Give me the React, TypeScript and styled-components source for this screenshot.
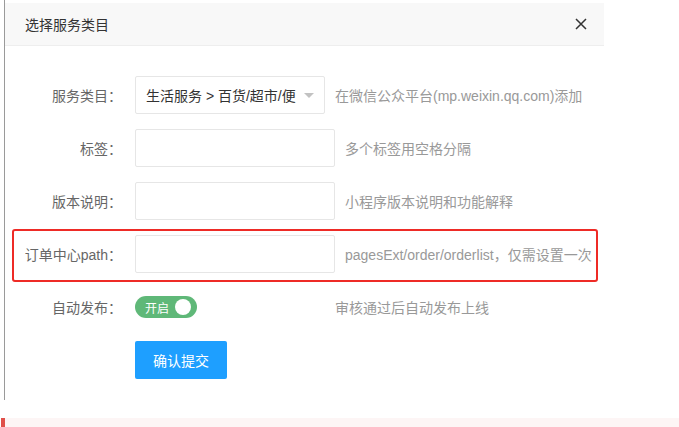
import React, { useState } from 'react'
import styled, { createGlobalStyle } from 'styled-components'

const GlobalStyle = createGlobalStyle`
  html, body {
    margin: 0;
    padding: 0;
    background: #fff;
    overflow: hidden;
  }
  body {
    font-family: "Liberation Sans", "Noto Sans CJK SC", sans-serif;
    font-size: 14px;
    color: #333;
  }
`

const Page = styled.div`
  width: 679px;
  height: 427px;
  display: flex;
  flex-direction: column;
  overflow: hidden;
`

const Layer = styled.div`
  flex: none;
  margin-left: 4px;
  width: 600px;
  height: 400px;
  padding-top: 3px;
  box-sizing: border-box;
  border-left: 1px solid #9a9a9a;
`

const LayerHeader = styled.div`
  height: 42px;
  display: flex;
  align-items: center;
  justify-content: space-between;
  padding: 0 16px 0 20px;
  background: #f8f8f8;
  border-bottom: 1px solid #eee;
`

const LayerTitle = styled.span`
  font-size: 14px;
  color: #333;
`

const CloseButton = styled.button`
  width: 14px;
  height: 14px;
  padding: 0;
  border: none;
  background: transparent;
  display: flex;
  align-items: center;
  justify-content: center;
  cursor: pointer;
`

const Form = styled.form`
  padding: 30px 0 0 0;
  display: flex;
  flex-direction: column;
  gap: 15px;
`

const FormItem = styled.div<{ $highlight?: boolean }>`
  position: relative;
  display: flex;
  align-items: center;
  height: 38px;

  ${({ $highlight }) => $highlight && `
    &::after {
      content: '';
      position: absolute;
      left: 7px;
      right: 6px;
      top: -6px;
      bottom: -9px;
      border: 2px solid #ee2b26;
      border-radius: 3px;
      pointer-events: none;
    }
  `}
`

const Label = styled.label`
  width: 117px;
  flex: none;
  text-align: right;
  color: #666;
  font-size: 14px;
  margin-right: 13px;
  white-space: nowrap;
`

const InputBlock = styled.div<{ $width: number }>`
  width: ${({ $width }) => $width}px;
  height: 38px;
  flex: none;
  margin-right: 10px;
  display: flex;
  align-items: center;
`

const TextInput = styled.input`
  width: 100%;
  height: 100%;
  box-sizing: border-box;
  border: 1px solid #e6e6e6;
  border-radius: 2px;
  padding: 0 10px;
  font: inherit;
  outline: none;
`

const SelectBox = styled.div`
  position: relative;
  width: 100%;
  height: 100%;
  box-sizing: border-box;
  border: 1px solid #e6e6e6;
  border-radius: 2px;
  padding: 0 30px 0 10px;
  display: flex;
  align-items: center;
  font-size: 14px;
  color: #333;
  white-space: nowrap;
  overflow: hidden;

  &::after {
    content: '';
    position: absolute;
    right: 10px;
    top: 16px;
    border: 5px solid transparent;
    border-top: 5px solid #c2c2c2;
  }
`

const Aux = styled.span`
  font-size: 14px;
  color: #999;
  white-space: nowrap;
`

const Switch = styled.div<{ $on: boolean }>`
  width: 62px;
  height: 22px;
  box-sizing: border-box;
  border-radius: 20px;
  background: ${({ $on }) => ($on ? '#5fb878' : '#d2d2d2')};
  display: flex;
  align-items: center;
  justify-content: space-between;
  padding: 0 6px 0 10px;
  cursor: pointer;
`

const SwitchText = styled.em`
  font-style: normal;
  font-size: 12px;
  color: #fff;
`

const Knob = styled.i`
  width: 16px;
  height: 16px;
  border-radius: 50%;
  background: #fff;
`

const SubmitButton = styled.button`
  width: 92px;
  height: 38px;
  border: none;
  border-radius: 2px;
  background: #1e9fff;
  color: #fff;
  font: inherit;
  font-size: 14px;
  cursor: pointer;
`

const Notice = styled.div`
  flex: none;
  margin-top: 18px;
  margin-left: 1px;
  height: 20px;
  background: #fdf5f5;
  border-left: 4px solid #e0504a;
`

export default function App() {
  const [autoPublish, setAutoPublish] = useState(true)

  return (
    <Page>
      <GlobalStyle />
      <Layer>
        <LayerHeader>
          <LayerTitle>选择服务类目</LayerTitle>
          <CloseButton type="button" aria-label="关闭">
            <svg width="12" height="12" viewBox="0 0 12 12">
              <path d="M1 1 L11 11 M11 1 L1 11" stroke="#333" strokeWidth="1.5" />
            </svg>
          </CloseButton>
        </LayerHeader>

        <Form onSubmit={(e) => e.preventDefault()}>
          <FormItem>
            <Label>服务类目：</Label>
            <InputBlock $width={190}>
              <SelectBox>生活服务 &gt; 百货/超市/便</SelectBox>
            </InputBlock>
            <Aux>在微信公众平台(mp.weixin.qq.com)添加</Aux>
          </FormItem>

          <FormItem>
            <Label>标签：</Label>
            <InputBlock $width={200}>
              <TextInput />
            </InputBlock>
            <Aux>多个标签用空格分隔</Aux>
          </FormItem>

          <FormItem>
            <Label>版本说明：</Label>
            <InputBlock $width={200}>
              <TextInput />
            </InputBlock>
            <Aux>小程序版本说明和功能解释</Aux>
          </FormItem>

          <FormItem $highlight>
            <Label>订单中心path：</Label>
            <InputBlock $width={200}>
              <TextInput />
            </InputBlock>
            <Aux>pagesExt/order/orderlist，仅需设置一次</Aux>
          </FormItem>

          <FormItem>
            <Label>自动发布：</Label>
            <InputBlock $width={190}>
              <Switch $on={autoPublish} onClick={() => setAutoPublish(!autoPublish)}>
                <SwitchText>{autoPublish ? '开启' : '关闭'}</SwitchText>
                <Knob />
              </Switch>
            </InputBlock>
            <Aux>审核通过后自动发布上线</Aux>
          </FormItem>

          <FormItem>
            <Label />
            <SubmitButton type="submit">确认提交</SubmitButton>
          </FormItem>
        </Form>
      </Layer>
      <Notice />
    </Page>
  )
}
